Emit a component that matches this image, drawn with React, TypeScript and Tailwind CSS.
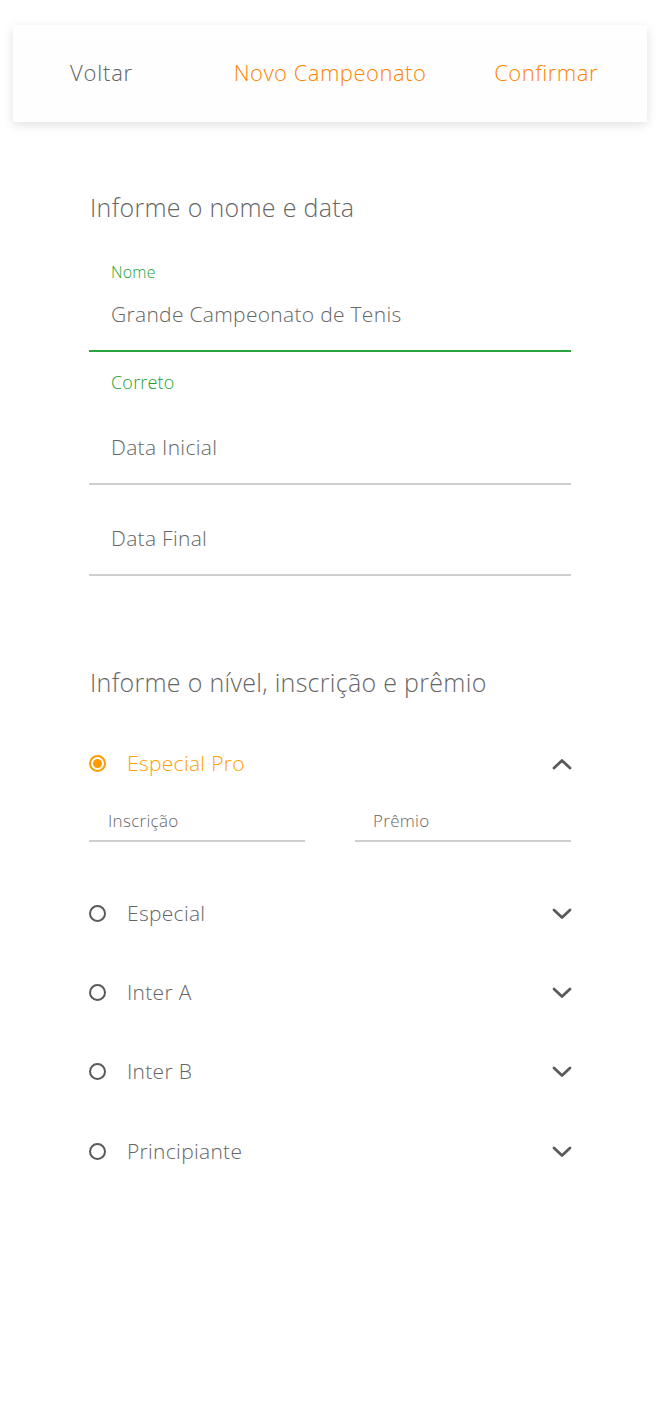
import React from "react";

const font = { fontFamily: "'Open Sans', Lato, sans-serif" };

function Chevron({ up }: { up?: boolean }) {
  return (
    <svg width="20" height="12" viewBox="0 0 20 12" className="mr-[-1px]">
      <path
        d={up ? "M2 10 L10 2.5 L18 10" : "M2 2 L10 9.5 L18 2"}
        fill="none"
        stroke="#5a5a5a"
        strokeWidth="2.8"
        strokeLinecap="round"
        strokeLinejoin="round"
      />
    </svg>
  );
}

function Radio({ checked }: { checked?: boolean }) {
  return checked ? (
    <div className="w-[17px] h-[17px] rounded-full border-[2px] border-[#ff9a00] flex items-center justify-center">
      <div className="w-[9px] h-[9px] rounded-full bg-[#ff9a00]" />
    </div>
  ) : (
    <div className="w-[17px] h-[17px] rounded-full border-[2px] border-[#5a5a5a]" />
  );
}

function LevelRow({ label, className }: { label: string; className?: string }) {
  return (
    <div className={"flex items-center h-[28px] " + (className ?? "")}>
      <Radio />
      <span className="ml-[21px] text-[21px] leading-[28px] tracking-[0.3px] text-[#666666]">{label}</span>
      <div className="ml-auto mt-[2px]">
        <Chevron />
      </div>
    </div>
  );
}

export default function App() {
  return (
    <div className="min-h-[1406px] bg-white font-[350]" style={font}>
      <div className="pt-[25px] px-[13px]">
        <div className="h-[97px] bg-[#fefefe] shadow-[0_3px_10px_rgba(0,0,0,0.12)] grid grid-cols-[1fr_auto_1fr] items-center text-[22px] tracking-[0.5px] pb-[2px]">
          <span className="pl-[57px] text-[#626262] tracking-[0.8px]">Voltar</span>
          <span className="text-[#ff8400]">Novo Campeonato</span>
          <span className="justify-self-end pr-[49px] text-[#ff8400]">Confirmar</span>
        </div>
      </div>

      <div className="mx-[89px] w-[482px]">
        <div className="mt-[69px] text-[25px] leading-[32px] tracking-[0.3px] text-[#666666] pl-[1px]">
          Informe o nome e data
        </div>

        <div className="mt-[39px] pl-[22px] text-[16px] leading-[20px] tracking-[0.2px] text-[#1a9f2f]">Nome</div>
        <div className="mt-[18px] pl-[22px] text-[21px] leading-[28px] tracking-[0.3px] text-[#666666]">
          Grande Campeonato de Tenis
        </div>
        <div className="mt-[22px] h-[2px] bg-[#2aa43a]" />
        <div className="mt-[18px] pl-[22px] text-[18px] leading-[24px] tracking-[0.2px] text-[#1a9f2f]">Correto</div>

        <div className="mt-[39px] pl-[22px] text-[21px] leading-[28px] tracking-[0.3px] text-[#666666]">Data Inicial</div>
        <div className="mt-[22px] h-[2px] bg-[#cfcfcf]" />
        <div className="mt-[39px] pl-[22px] text-[21px] leading-[28px] tracking-[0.3px] text-[#666666]">Data Final</div>
        <div className="mt-[22px] h-[2px] bg-[#cfcfcf]" />

        <div className="mt-[90px] text-[25px] leading-[32px] tracking-[0.3px] text-[#666666] pl-[1px]">
          Informe o nível, inscrição e prêmio
        </div>

        <div className="mt-[51px] flex items-center h-[28px]">
          <Radio checked />
          <span className="ml-[21px] text-[21px] leading-[28px] tracking-[0.3px] text-[#ffa000]">Especial Pro</span>
          <div className="ml-auto mt-[2px]">
            <Chevron up />
          </div>
        </div>

        <div className="mt-[33px] grid grid-cols-2 gap-[50px]">
          <div>
            <div className="pl-[19px] text-[17px] leading-[22px] tracking-[0.3px] text-[#666666]">Inscrição</div>
            <div className="mt-[8px] h-[2px] bg-[#cfcfcf]" />
          </div>
          <div>
            <div className="pl-[18px] text-[17px] leading-[22px] tracking-[0.3px] text-[#666666]">Prêmio</div>
            <div className="mt-[8px] h-[2px] bg-[#cfcfcf]" />
          </div>
        </div>

        <LevelRow label="Especial" className="mt-[57px]" />
        <LevelRow label="Inter A" className="mt-[51px]" />
        <LevelRow label="Inter B" className="mt-[51px]" />
        <LevelRow label="Principiante" className="mt-[52px]" />
      </div>
    </div>
  );
}
